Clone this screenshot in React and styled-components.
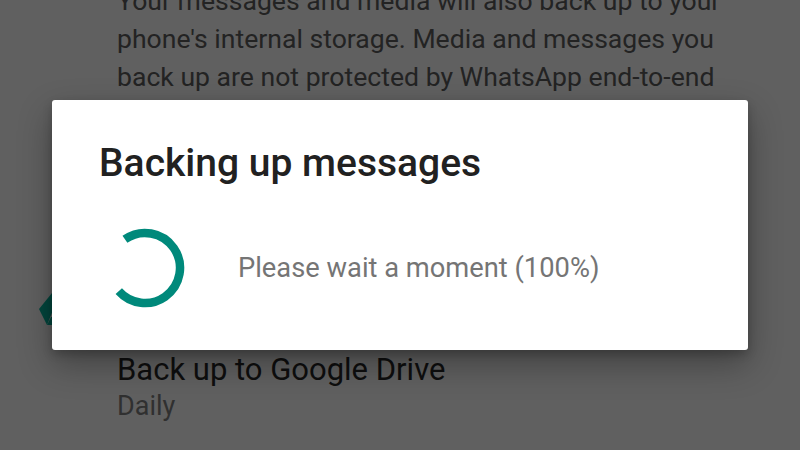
import React from 'react';
import styled, { createGlobalStyle } from 'styled-components';

const GlobalStyle = createGlobalStyle`
  html, body {
    margin: 0;
    padding: 0;
    width: 800px;
    height: 450px;
    overflow: hidden;
    background: #606060;
    font-family: Roboto, "Noto Sans", "Liberation Sans", sans-serif;
  }
`;

const Page = styled.div`
  position: relative;
  width: 800px;
  height: 450px;
  overflow: hidden;
  background: #606060;
`;

const Settings = styled.div`
  display: grid;
  grid-template-columns: 117px 1fr;
`;

const IconCell = styled.div`
  padding-top: 290px;
  padding-left: 38px;
`;

const TextCell = styled.div`
  display: flex;
  flex-direction: column;
`;

const Paragraph = styled.p`
  margin: -18px 0 0;
  font-size: 26.6px;
  line-height: 38px;
  color: #232323;
  white-space: nowrap;
`;

const Spacer = styled.div`
  height: ${p => p.h}px;
`;

const RowTitle = styled.div`
  font-size: 31px;
  line-height: 37px;
  color: #0e0e0e;
`;

const RowSub = styled.div`
  font-size: 27px;
  line-height: 36px;
  color: #303030;
`;

const Dialog = styled.div`
  position: absolute;
  left: 52px;
  top: 100px;
  width: 696px;
  height: 250px;
  box-sizing: border-box;
  background: #ffffff;
  border-radius: 3px;
  box-shadow: 0 14px 34px rgba(0, 0, 0, 0.32), 0 4px 10px rgba(0, 0, 0, 0.2);
  padding: 41px 47px 0;
  display: flex;
  flex-direction: column;
`;

const Title = styled.h2`
  margin: 0;
  font-size: 39px;
  line-height: 44px;
  font-weight: 500;
  color: #212121;
`;

const Body = styled.div`
  display: flex;
  align-items: center;
  gap: 47px;
  margin-top: 37px;
`;

const Message = styled.div`
  font-size: 27.3px;
  color: #757575;
`;

const Spinner = () => {
  const r = 35;
  const c = 2 * Math.PI * r;
  const arc = (263 / 360) * c;
  return (
    <svg width="92" height="92" viewBox="0 0 92 92">
      <circle
        cx="46"
        cy="46"
        r={r}
        fill="none"
        stroke="#00897b"
        strokeWidth="8.5"
        strokeDasharray={`${arc} ${c}`}
        transform="rotate(-125 46 46)"
      />
    </svg>
  );
};

const DriveIcon = () => (
  <svg width="36" height="36" viewBox="0 0 36 36">
    <polygon points="1,19 14,3 22,3 9,35" fill="#03463d" />
    <polygon points="14,3 22,3 35,24 27,24" fill="#03463d" />
    <polygon points="9,35 13,27 35,27 31,35" fill="#03463d" />
  </svg>
);

export default function App() {
  return (
    <>
      <GlobalStyle />
      <Page>
        <Settings>
          <IconCell>
            <DriveIcon />
          </IconCell>
          <TextCell>
            <Paragraph>
              Your messages and media will also back up to your
              <br />
              phone's internal storage. Media and messages you
              <br />
              back up are not protected by WhatsApp end-to-end
              <br />
              encryption while in Google Drive.
            </Paragraph>
            <Spacer h={217} />
            <RowTitle>Back up to Google Drive</RowTitle>
            <RowSub>Daily</RowSub>
          </TextCell>
        </Settings>
        <Dialog>
          <Title>Backing up messages</Title>
          <Body>
            <Spinner />
            <Message>Please wait a moment (100%)</Message>
          </Body>
        </Dialog>
      </Page>
    </>
  );
}
